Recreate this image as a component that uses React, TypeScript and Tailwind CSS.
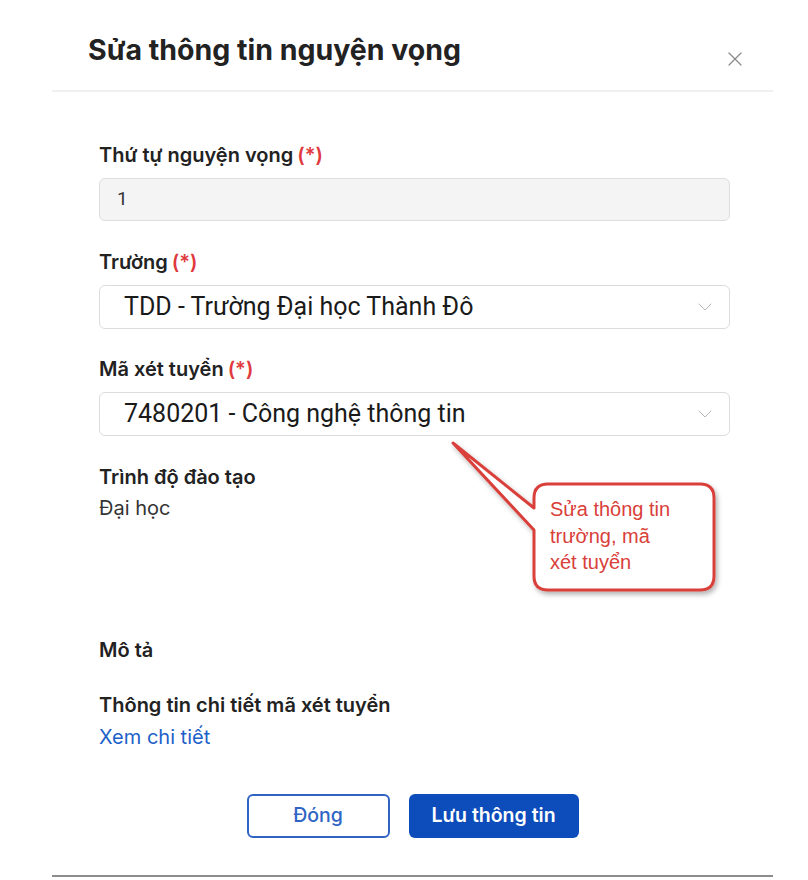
import { X, ChevronDown } from 'lucide-react';

const labelCls = "text-[20px] leading-6 font-semibold text-[#222222]";

function Req() {
  return <span className="text-[#e0393e] ml-1">(*)</span>;
}

function SelectBox({ value }: { value: string }) {
  return (
    <div className="flex h-[44px] items-center justify-between rounded-md border border-[#dcdcdc] bg-white pl-[24px] pr-[12px]">
      <span className="text-[25px] text-[#1a1a1a] font-['Roboto',sans-serif]">{value}</span>
      <ChevronDown className="h-6 w-6 text-[#b8b8b8]" strokeWidth={1} />
    </div>
  );
}

export default function App() {
  return (
    <div className="relative min-h-screen bg-white font-['Inter','Noto_Sans',sans-serif]">
      <div className="ml-[52px] w-[721px]">
        <div className="flex h-[92px] items-center justify-between border-b-2 border-[#f0f0f0] pl-[36px] pr-[26px]">
          <h1 className="mt-[10px] text-[28.5px] font-bold text-[#222222]">Sửa thông tin nguyện vọng</h1>
          <X className="mt-[28px] h-6 w-6 text-[#8a8a8a]" strokeWidth={1.2} />
        </div>

        <div className="pl-[47px] pr-[43px] pt-[51px]">
          <div className={labelCls}>
            Thứ tự nguyện vọng<Req />
          </div>
          <div className="mt-[11px] flex h-[43px] items-center rounded-md border border-[#dedede] bg-[#f4f4f4] px-[17px] text-[19px] text-[#333333] font-['Roboto',sans-serif]">
            1
          </div>

          <div className={`${labelCls} mt-[29px]`}>
            Trường<Req />
          </div>
          <div className="mt-[11px]">
            <SelectBox value="TDD - Trường Đại học Thành Đô" />
          </div>

          <div className={`${labelCls} mt-[28px]`}>
            Mã xét tuyển<Req />
          </div>
          <div className="mt-[11px]">
            <SelectBox value="7480201 - Công nghệ thông tin" />
          </div>

          <div className={`${labelCls} mt-[29px]`}>Trình độ đào tạo</div>
          <div className="mt-[7px] text-[20px] leading-6 text-[#333333]">Đại học</div>

          <div className={`${labelCls} mt-[118px]`}>Mô tả</div>

          <div className={`${labelCls} mt-[31px]`}>Thông tin chi tiết mã xét tuyển</div>
          <div className="mt-[8px] text-[20px] leading-6 text-[#1d5fc9]">Xem chi tiết</div>
        </div>

        <div className="mt-[45px] flex justify-center gap-[19px]">
          <button className="h-[44px] w-[143px] rounded-md border-2 border-[#2f64c4] bg-white text-[19.5px] font-medium text-[#2f64c4]">
            Đóng
          </button>
          <button className="h-[44px] w-[170px] rounded-md bg-[#0c4dbb] text-[19.5px] font-semibold text-white">
            Lưu thông tin
          </button>
        </div>

        <div className="mt-[37px] h-[2px] bg-[#8c8c8c]" />
      </div>

      {/* callout annotation */}
      <svg className="pointer-events-none absolute left-0 top-0" width="808" height="880">
        <defs>
          <filter id="sh" x="-20%" y="-20%" width="140%" height="140%">
            <feDropShadow dx="2" dy="3" stdDeviation="2.5" floodColor="#000" floodOpacity="0.3" />
          </filter>
        </defs>
        <path
          d="M548 484 H700 Q714 484 714 498 V576 Q714 590 700 590 H548 Q534 590 534 576 V530 L453 443 L534 508 V498 Q534 484 548 484 Z"
          fill="#ffffff"
          stroke="#d9403a"
          strokeWidth="3"
          strokeLinejoin="round"
          filter="url(#sh)"
        />
      </svg>
      <div className="absolute left-[550px] top-[496px] text-[20px] leading-[26.5px] text-[#d9403a] font-['Liberation_Sans',sans-serif]">
        Sửa thông tin
        <br />
        trường, mã
        <br />
        xét tuyển
      </div>
    </div>
  );
}
